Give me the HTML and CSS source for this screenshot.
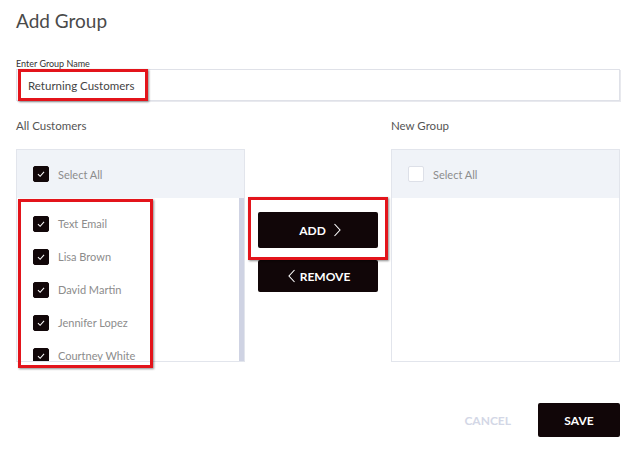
FILE: index.html
```html
<!DOCTYPE html>
<html lang="en">
<head>
  <meta charset="UTF-8" />
  <title>Add Group</title>
  <link rel="stylesheet" href="styles.css">
</head>
<body>

  <h1 class="title">Add Group</h1>

  <label class="field-label">Enter Group Name</label>
  <div class="field">
    <span class="field-value marked">Returning Customers</span>
  </div>

  <div class="transfer">
    <div class="column">
      <div class="column-label">All Customers</div>
      <div class="panel">
        <div class="panel-head">
          <span class="check on"><svg viewBox="0 0 16 16"><polyline points="4.5,8.2 7,10.6 11.5,5.6" /></svg></span>
          <span class="name">Select All</span>
        </div>
        <div class="list-wrap">
          <ul class="list">
            <li><span class="check on"><svg viewBox="0 0 16 16"><polyline points="4.5,8.2 7,10.6 11.5,5.6" /></svg></span><span class="name">Text Email</span></li>
            <li><span class="check on"><svg viewBox="0 0 16 16"><polyline points="4.5,8.2 7,10.6 11.5,5.6" /></svg></span><span class="name">Lisa Brown</span></li>
            <li><span class="check on"><svg viewBox="0 0 16 16"><polyline points="4.5,8.2 7,10.6 11.5,5.6" /></svg></span><span class="name">David Martin</span></li>
            <li><span class="check on"><svg viewBox="0 0 16 16"><polyline points="4.5,8.2 7,10.6 11.5,5.6" /></svg></span><span class="name">Jennifer Lopez</span></li>
            <li><span class="check on"><svg viewBox="0 0 16 16"><polyline points="4.5,8.2 7,10.6 11.5,5.6" /></svg></span><span class="name">Courtney White</span></li>
          </ul>
          <div class="scrollbar"></div>
          <div class="list-mark"></div>
        </div>
      </div>
    </div>

    <div class="actions">
      <button class="btn btn-add marked">ADD <svg class="chev" viewBox="0 0 8 14"><polyline points="1.5,1 7,7 1.5,13" /></svg></button>
      <button class="btn btn-remove"><svg class="chev" viewBox="0 0 8 14"><polyline points="6.5,1 1,7 6.5,13" /></svg> REMOVE</button>
    </div>

    <div class="column">
      <div class="column-label">New Group</div>
      <div class="panel">
        <div class="panel-head">
          <span class="check"></span>
          <span class="name">Select All</span>
        </div>
      </div>
    </div>
  </div>

  <div class="footer">
    <button class="btn-cancel">CANCEL</button>
    <button class="btn btn-save">SAVE</button>
  </div>

</body>
</html>
```

FILE: styles.css
```css
body {
  margin: 0;
  padding: 10px 20px 0 16px;
  font-family: Lato, "Open Sans", sans-serif;
  background: #fff;
  color: #555;
}

.title {
  margin: 0;
  font-size: 19px;
  font-weight: 400;
  color: #4a4a4a;
  line-height: 22px;
}

.field-label {
  display: block;
  margin-top: 26px;
  font-size: 9px;
  color: #333;
  line-height: 11px;
}

.field {
  position: relative;
  height: 30px;
  border: 1px solid #dfe1e8;
  box-shadow: 1px 1px 0 #e8e9ee;
  display: flex;
  align-items: center;
  padding-left: 11px;
}

.field-value {
  font-size: 11.5px;
  color: #444;
}

/* red callouts */
.marked {
  position: relative;
}

.field-value.marked::after {
  content: "";
  position: absolute;
  left: -10px;
  right: -14px;
  top: -10px;
  bottom: -9px;
  border: 3px solid #e3141b;
  box-shadow: 1px 1px 2px rgba(0, 0, 0, 0.45);
}

.transfer {
  display: grid;
  grid-template-columns: 229px 120px 229px;
  column-gap: 13px;
  margin-top: 18px;
}

.column-label {
  font-size: 11.5px;
  color: #555;
  line-height: 14px;
  margin-bottom: 16px;
}

.panel {
  height: 211px;
  border: 1px solid #e2e5ec;
  display: flex;
  flex-direction: column;
}

.panel-head {
  height: 48px;
  background: #f0f3f8;
  display: flex;
  align-items: center;
  padding-left: 16px;
  flex-shrink: 0;
}

.check {
  width: 16px;
  height: 16px;
  border-radius: 2px;
  background: #fff;
  border: 1px solid #dde0e8;
  box-sizing: border-box;
  margin-right: 9px;
  display: inline-flex;
}

.check.on {
  background: #120709;
  border-color: #120709;
}

.check svg {
  width: 100%;
  height: 100%;
}

.check polyline {
  fill: none;
  stroke: #fff;
  stroke-width: 1.2;
}

.name {
  font-size: 11px;
  color: #8c8c8c;
}

.list-wrap {
  position: relative;
  flex: 1;
  min-height: 0;
  display: flex;
}

.list {
  flex: 1;
  list-style: none;
  margin: 0;
  padding: 9px 0 0 16px;
  overflow: hidden;
}

.scrollbar {
  width: 5px;
  background: #cfd3e3;
}

.list li {
  height: 33px;
  display: flex;
  align-items: center;
}

.list-mark {
  position: absolute;
  left: 1px;
  top: 1px;
  width: 129px;
  height: 163px;
  border: 3px solid #e3141b;
  box-shadow: 1px 1px 2px rgba(0, 0, 0, 0.45);
  pointer-events: none;
}

.actions {
  display: flex;
  flex-direction: column;
  gap: 12px;
  padding-top: 93px;
}

.btn {
  background: #110608;
  color: #fff;
  border: none;
  border-radius: 2px;
  font-family: inherit;
  font-weight: 700;
  font-size: 12px;
  display: flex;
  align-items: center;
  justify-content: center;
  gap: 7px;
  cursor: pointer;
}

.btn-add {
  height: 36px;
  padding-left: 10px;
}

.btn-add::after {
  content: "";
  position: absolute;
  left: -10px;
  right: -10px;
  top: -15px;
  bottom: -12px;
  border: 3px solid #e3141b;
  box-shadow: 1px 1px 2px rgba(0, 0, 0, 0.45);
}

.btn-remove {
  height: 32px;
  gap: 4px;
  padding-right: 4px;
}

.chev {
  width: 8px;
  height: 14px;
}

.chev polyline {
  fill: none;
  stroke: #fff;
  stroke-width: 1.1;
}

.footer {
  display: flex;
  justify-content: flex-end;
  align-items: center;
  margin-top: 41px;
  gap: 27px;
}

.btn-cancel {
  background: none;
  border: none;
  font-family: inherit;
  font-size: 12px;
  font-weight: 700;
  color: #d3d7e6;
  padding: 0;
}

.btn-save {
  width: 82px;
  height: 34px;
}
```
